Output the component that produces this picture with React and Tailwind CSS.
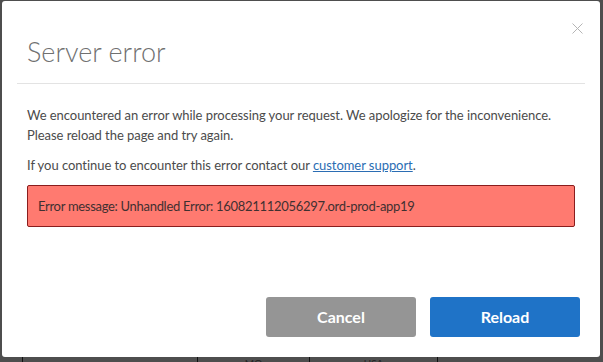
export default function App() {
  return (
    <div className="w-[603px] h-[362px] overflow-hidden bg-[#4e4e4e] pt-[1px] pl-[2px] font-['Lato',sans-serif]">
      <div className="relative w-[598px] h-[356px] bg-white rounded-[3px] flex flex-col">
        {/* Close */}
        <button className="absolute right-[17px] top-[22px] w-[11px] h-[11px] text-[#b5b5b5]">
          <svg viewBox="0 0 11 11" className="w-[11px] h-[11px]" fill="none" stroke="currentColor" strokeWidth="1">
            <path d="M0.5 0.5 L10.5 10.5 M10.5 0.5 L0.5 10.5" />
          </svg>
        </button>

        <div className="px-[15px]">
          <div className="h-[83px] pl-[10px] pt-[34px] border-b border-[#e3e3e3]">
            <h1 className="text-[27px] leading-[34px] font-light text-[#707070]">Server error</h1>
          </div>
        </div>

        <div className="px-[25px] pt-[21px] text-[13px] tracking-[-0.05px] leading-[20px] text-[#4b4b4b]">
          <p>
            We encountered an error while processing your request. We apologize for the inconvenience.
            <br />
            Please reload the page and try again.
          </p>
          <p className="mt-[10px]">
            If you continue to encounter this error contact our{" "}
            <a href="#" className="text-[#2b6db3] underline">customer support</a>.
          </p>
          <div className="mt-[10px] h-[42px] flex items-center px-[10px] bg-[#ff7a70] border border-[#8a1d1d] rounded-[2px] text-[#3f3030] tracking-[-0.3px]">
            Error message: Unhandled Error: 160821112056297.ord-prod-app19
          </div>
        </div>

        <div className="mt-auto mb-[20px] pr-[20px] flex justify-end gap-[14px]">
          <button className="w-[150px] h-[40px] rounded-[3px] bg-[#959595] text-white text-[16px] font-bold">
            Cancel
          </button>
          <button className="w-[150px] h-[40px] rounded-[3px] bg-[#1f73c7] text-white text-[16px] font-bold">
            Reload
          </button>
        </div>
      </div>

      {/* backdrop table peeking below */}
      <div className="flex h-[5px] text-[10px] leading-[12px] text-[#222]">
        <div className="w-[20px]" />
        <div className="w-[175px] border-l border-[#111]" />
        <div className="w-[112px] border-l border-[#111] flex justify-center">MO</div>
        <div className="w-[128px] border-l border-[#111] flex justify-center">USA</div>
        <div className="flex-1 border-l border-[#111]" />
      </div>
    </div>
  );
}
